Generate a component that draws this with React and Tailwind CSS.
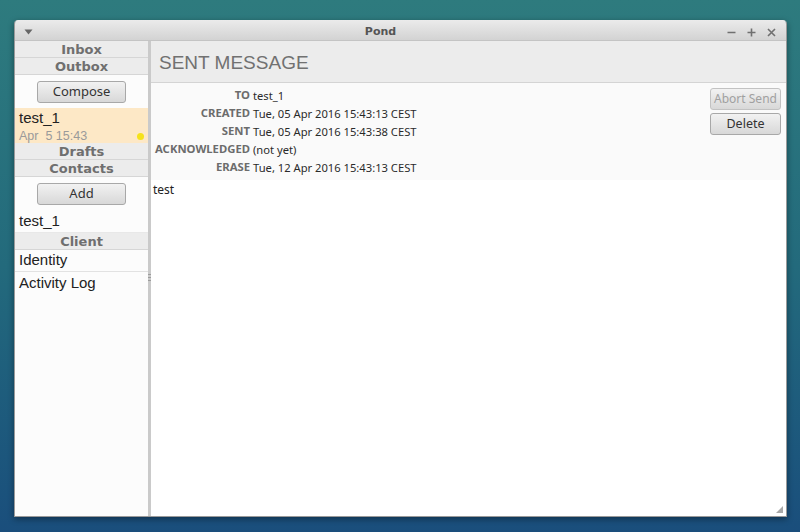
function SectionHeader({ children }) {
  return (
    <div className="h-[17px] flex items-center justify-center bg-[#ececec] border-b border-[#d6d6d6] text-[13px] font-bold text-[#6f6f6f] leading-none font-['DejaVu_Sans',sans-serif]">
      {children}
    </div>
  );
}

function GtkButton({ children, disabled, className = "" }) {
  return (
    <div
      className={
        "flex items-center justify-center h-[22px] rounded-[3px] border border-[#a8a8a8] bg-gradient-to-b from-[#f2f2f2] to-[#d8d8d8] leading-none font-['Noto_Sans',sans-serif] " +
        (disabled ? "text-[#a0a0a0] border-[#c2c2c2] from-[#e4e4e4] to-[#d6d6d6] " : "text-[#333] ") +
        className
      }
    >
      {children}
    </div>
  );
}

const details = [
  ["TO", "test_1"],
  ["CREATED", "Tue, 05 Apr 2016 15:43:13 CEST"],
  ["SENT", "Tue, 05 Apr 2016 15:43:38 CEST"],
  ["ACKNOWLEDGED", "(not yet)"],
  ["ERASE", "Tue, 12 Apr 2016 15:43:13 CEST"],
];

export default function App() {
  return (
    <div className="w-[800px] h-[532px] overflow-hidden bg-gradient-to-b from-[#2e7b7e] via-[#236a7c] to-[#1a4e7c] pt-[20px] pl-[14px]">
      <div className="w-[773px] h-[497px] flex flex-col rounded-t-[4px] overflow-hidden shadow-[0_2px_6px_rgba(0,0,0,0.4)] border border-[#9a9a9a] border-t-0">
        {/* title bar */}
        <div className="h-[21px] shrink-0 flex items-center bg-gradient-to-b from-[#ebebeb] to-[#d3d3d3] border-b border-[#c4c4c4] px-[8px] pt-[4px] relative">
          <svg width="9" height="6" viewBox="0 0 9 6" className="ml-[1px]">
            <path d="M0.5 0.5 L8.5 0.5 L4.5 5.5 Z" fill="#666" />
          </svg>
          <div className="absolute inset-0 pt-[4px] pr-[40px] flex items-center justify-center text-[11px] font-bold text-[#555] font-['DejaVu_Sans',sans-serif]">
            Pond
          </div>
          <div className="ml-auto flex items-center gap-[11px] mr-[2px]">
            <svg width="9" height="9" viewBox="0 0 9 9">
              <path d="M0.5 4.5 H8.5" stroke="#707070" strokeWidth="1.6" />
            </svg>
            <svg width="9" height="9" viewBox="0 0 9 9">
              <path d="M0.5 4.5 H8.5 M4.5 0.5 V8.5" stroke="#707070" strokeWidth="1.6" />
            </svg>
            <svg width="9" height="9" viewBox="0 0 9 9">
              <path d="M1 1 L8 8 M8 1 L1 8" stroke="#707070" strokeWidth="1.6" />
            </svg>
          </div>
        </div>

        <div className="flex-1 flex min-h-0">
          {/* sidebar */}
          <div className="w-[133px] shrink-0 bg-[#fcfcfc] flex flex-col">
            <SectionHeader>Inbox</SectionHeader>
            <SectionHeader>Outbox</SectionHeader>
            <div className="h-[33px] flex items-center justify-center">
              <GtkButton className="w-[89px] text-[13px]">Compose</GtkButton>
            </div>
            <div className="h-[35px] bg-[#fde8c6] pl-[4px] pr-[4px] pt-[1px] font-['Liberation_Sans',sans-serif]">
              <div className="text-[15px] text-[#222] leading-[17px]">test_1</div>
              <div className="flex items-center justify-between mt-[2px]">
                <span className="text-[12.5px] text-[#9a9a9a] leading-[16px] whitespace-pre">Apr  5 15:43</span>
                <span className="w-[7px] h-[7px] rounded-full bg-[#f5e21b]" />
              </div>
            </div>
            <SectionHeader>Drafts</SectionHeader>
            <SectionHeader>Contacts</SectionHeader>
            <div className="h-[33px] flex items-center justify-center">
              <GtkButton className="w-[89px] text-[13px]">Add</GtkButton>
            </div>
            <div className="h-[23px] flex items-center pl-[4px] text-[15px] text-[#222] font-['Liberation_Sans',sans-serif] border-b border-[#e8e8e8]">
              test_1
            </div>
            <SectionHeader>Client</SectionHeader>
            <div className="h-[22px] flex items-center pl-[4px] text-[15px] text-[#222] font-['Liberation_Sans',sans-serif] border-b border-[#e2e2e2]">
              Identity
            </div>
            <div className="h-[22px] flex items-center pl-[4px] text-[15px] text-[#222] font-['Liberation_Sans',sans-serif]">
              Activity Log
            </div>
          </div>

          {/* pane separator */}
          <div className="w-[3px] shrink-0 bg-[#cacaca] flex flex-col items-center pt-[233px]">
            <div className="w-[3px] h-[1px] bg-[#9c9c9c]" />
            <div className="w-[3px] h-[1px] bg-[#9c9c9c] mt-[2px]" />
            <div className="w-[3px] h-[1px] bg-[#9c9c9c] mt-[2px]" />
          </div>

          {/* main */}
          <div className="flex-1 flex flex-col bg-white relative">
            <div className="h-[42px] shrink-0 bg-[#ececec] border-b border-[#d4d4d4] flex items-center pl-[8px] pt-[3px]">
              <span className="text-[19px] text-[#717171] font-['Liberation_Sans',sans-serif]">
                SENT MESSAGE
              </span>
            </div>
            <div className="h-[97px] shrink-0 bg-[#fafafa] flex pt-[4px]">
              <div className="flex flex-col">
                {details.map(([label, value]) => (
                  <div key={label} className="flex items-center h-[18px]">
                    <span className="w-[99px] text-right text-[11.3px] font-bold text-[#6c6c6c] font-['Noto_Sans',sans-serif] leading-none -mt-[3px]">
                      {label}
                    </span>
                    <span className="pl-[3px] text-[11.2px] text-[#2a2a2a] font-['Noto_Sans',sans-serif] leading-none">
                      {value}
                    </span>
                  </div>
                ))}
              </div>
              <div className="ml-auto mr-[5px] flex flex-col gap-[3px] pt-[1px]">
                <GtkButton disabled className="w-[71px] text-[12px]">Abort Send</GtkButton>
                <GtkButton className="w-[71px] text-[12.5px]">Delete</GtkButton>
              </div>
            </div>
            <div className="pl-[2px] pt-[1px] text-[12px] text-[#222] font-['Noto_Sans',sans-serif]">test</div>
            <svg width="7" height="7" viewBox="0 0 7 7" className="absolute right-[3px] bottom-[3px]">
              <path d="M7 0 L7 7 L0 7 Z" fill="#a8a8a8" />
            </svg>
          </div>
        </div>
      </div>
    </div>
  );
}
